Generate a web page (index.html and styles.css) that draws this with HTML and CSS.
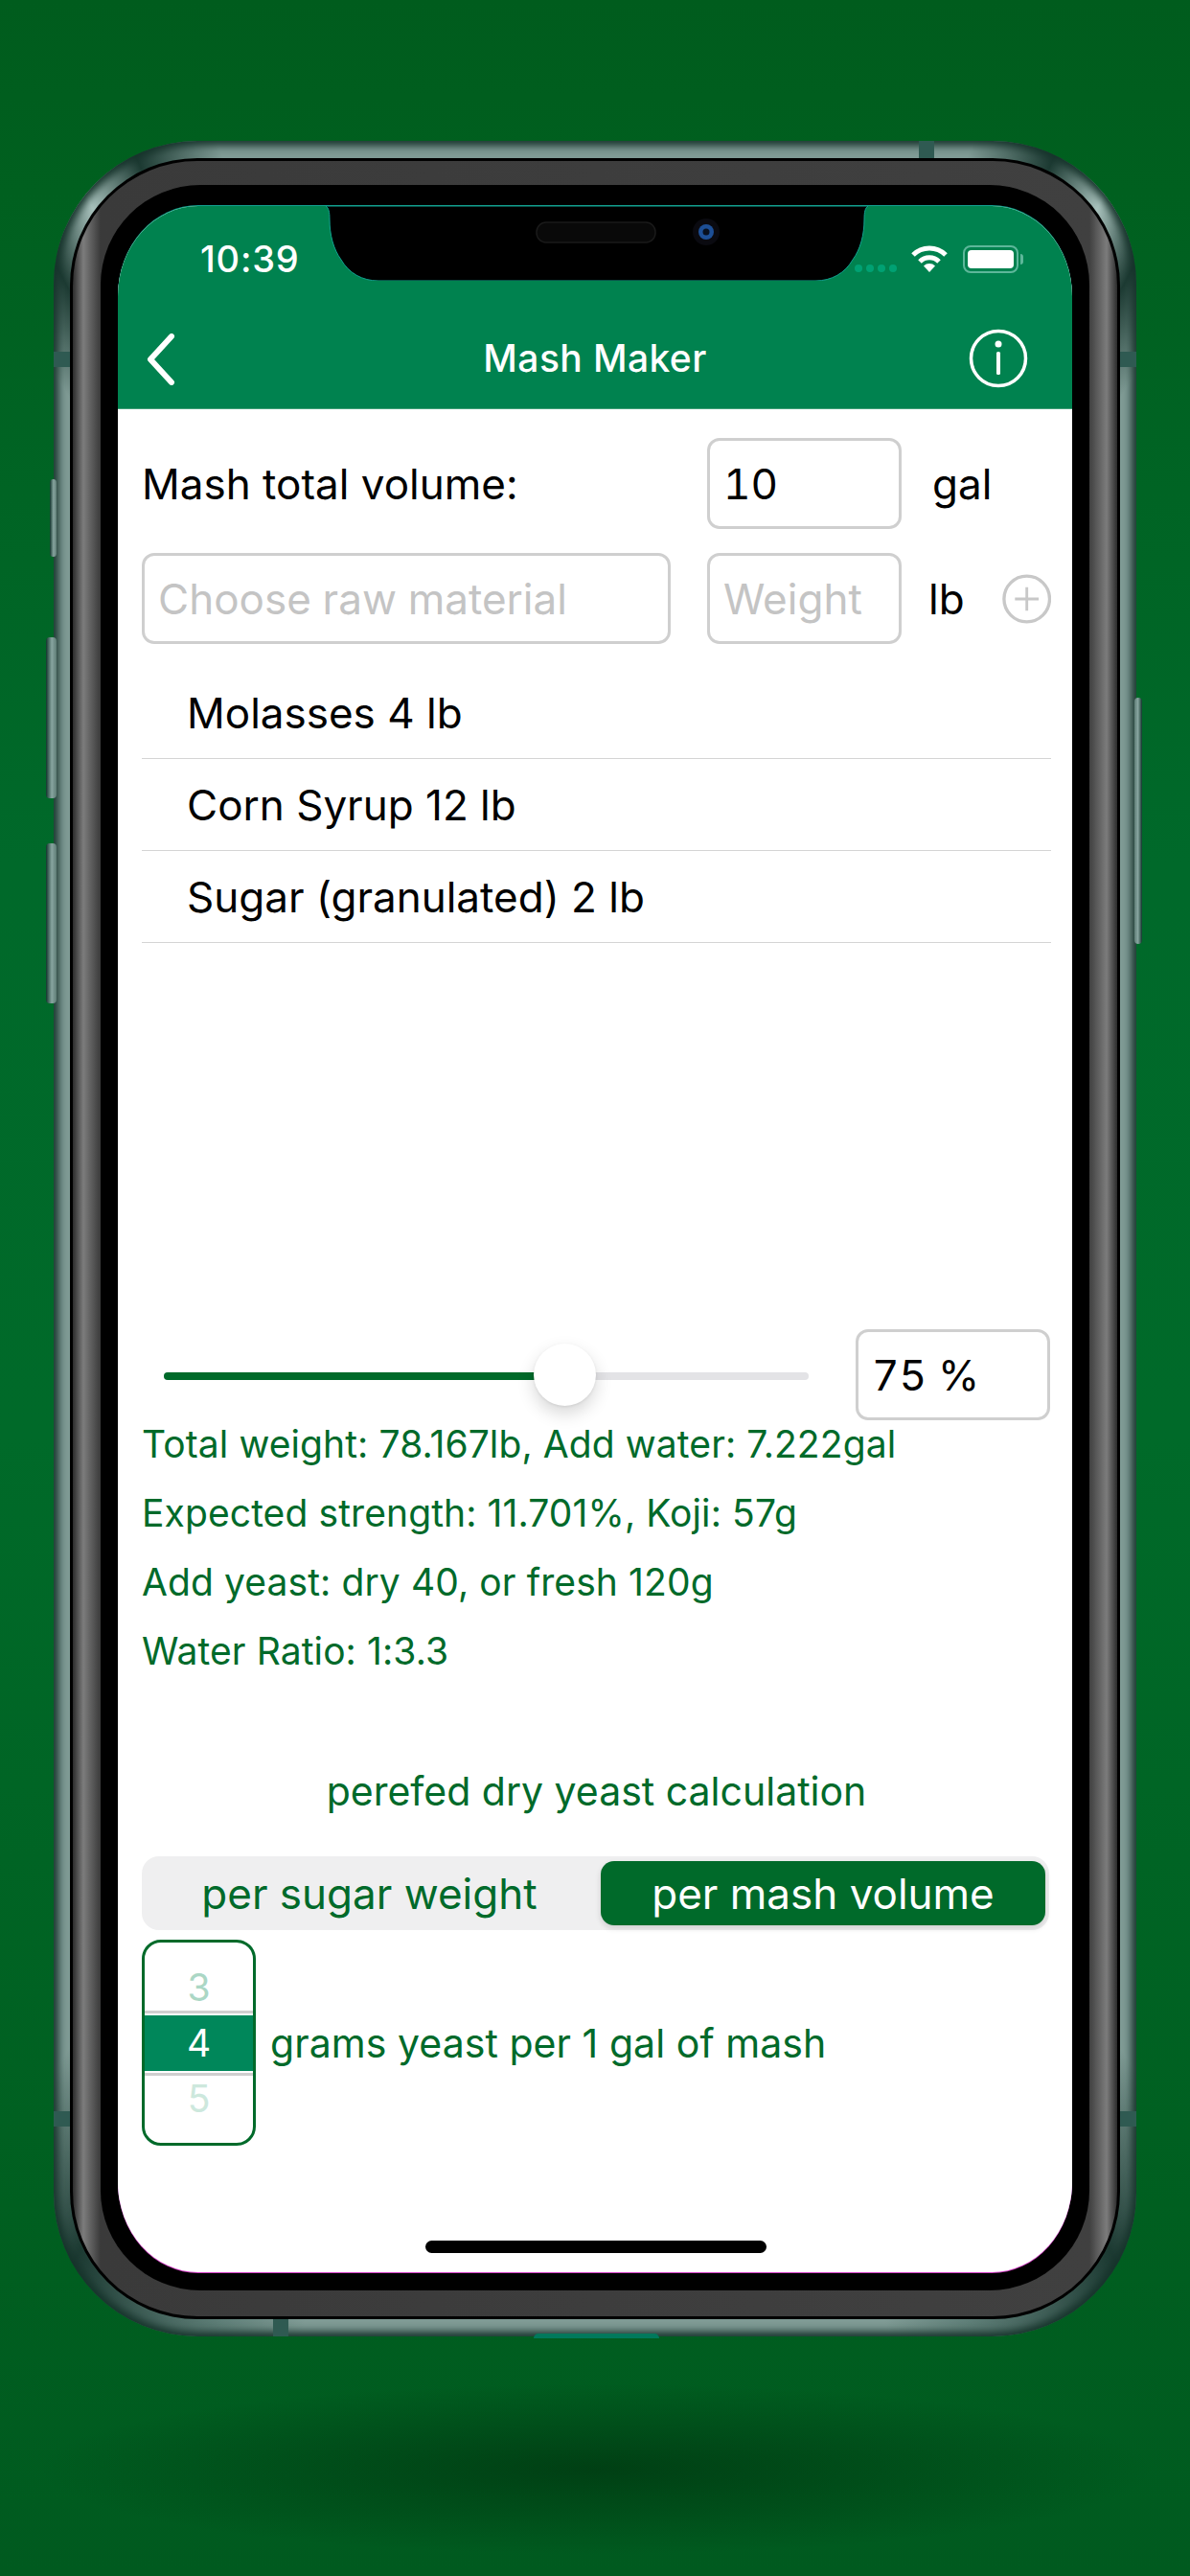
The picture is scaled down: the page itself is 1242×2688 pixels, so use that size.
FILE: index.html
```html
<!doctype html>
<html>
<head>
    <meta charset="UTF-8">
    <title>Mash Maker</title>
    <link rel="stylesheet" href="styles.css">
</head>
<body>
<div class="floor-shadow"></div>
<div class="phone">
    <i class="side-btn silent"></i>
    <i class="side-btn vol-up"></i>
    <i class="side-btn vol-down"></i>
    <i class="side-btn power"></i>
    <i class="seam seam-top"></i>
    <i class="seam seam-left"></i>
    <i class="seam seam-right"></i>
    <i class="seam seam-left-low"></i>
    <i class="seam seam-right-low"></i>
    <i class="seam seam-bottom"></i>
    <i class="port"></i>
    <div class="gap">
        <div class="bezel">
            <div class="glass">
                <div class="screen">
                    <svg class="notch" width="566" height="78" viewBox="0 0 566 78">
                        <path d="M0 0C3 2 4 6 4 14C4 30 8 45 16 56C24 70 38 78 55 78L511 78C528 78 542 70 550 56C558 45 562 30 562 14C562 6 563 2 566 0Z" fill="#000" stroke="#12a08f" stroke-width="1"/>
                        <rect x="220" y="17" width="124" height="21" rx="10" fill="#090909" stroke="#1a1a1a" stroke-width="1.5"/>
                        <circle cx="397" cy="27" r="14" fill="#0a0a10"/>
                        <circle cx="397" cy="27" r="8" fill="#1d4f96"/>
                        <circle cx="397" cy="27" r="3.5" fill="#08101f"/>
                    </svg>

                    <div class="header">
                        <div class="status">
                            <span class="time">10:39</span>
                            <div class="status-right">
                                <div class="dots"><i></i><i></i><i></i><i></i></div>
                                <svg width="38" height="28" viewBox="0 0 38 28">
                                    <path d="M2 10A24 24 0 0 1 36 10" fill="none" stroke="#fff" stroke-width="5"/>
                                    <path d="M9 17A14 14 0 0 1 29 17" fill="none" stroke="#fff" stroke-width="5"/>
                                    <path d="M19 28L13 21.500A8.500 8.500 0 0 1 25 21.500Z" fill="#fff"/>
                                </svg>
                                <div class="battery"><i></i></div>
                            </div>
                        </div>
                        <div class="nav">
                            <svg class="nav-back" width="32" height="54" viewBox="0 0 32 54">
                                <path d="M27 3L5 27L27 51" fill="none" stroke="#fff" stroke-width="6" stroke-linecap="round" stroke-linejoin="round"/>
                            </svg>
                            <span class="nav-title">Mash Maker</span>
                            <svg class="nav-info" width="62" height="62" viewBox="0 0 62 62">
                                <circle cx="31" cy="31" r="28.500" fill="none" stroke="#fff" stroke-width="3.500"/>
                                <circle cx="31" cy="16" r="3.500" fill="#fff"/>
                                <rect x="29" y="24" width="4" height="24" rx="1.500" fill="#fff"/>
                            </svg>
                        </div>
                    </div>

                    <div class="content">
                        <div class="form-row first">
                            <label class="label">Mash total volume:</label>
                            <input class="field small" type="text" value="10">
                            <span class="unit gal">gal</span>
                        </div>
                        <div class="form-row second">
                            <input class="field wide" type="text" placeholder="Choose raw material">
                            <input class="field small" type="text" placeholder="Weight">
                            <span class="unit lb">lb</span>
                            <svg class="add" width="54" height="54" viewBox="0 0 54 54">
                                <circle cx="27" cy="27" r="25" fill="none" stroke="#c8c8c8" stroke-width="3.500"/>
                                <path d="M27 14V40M14 27H40" stroke="#c8c8c8" stroke-width="3"/>
                            </svg>
                        </div>

                        <ul class="materials">
                            <li>Molasses 4 lb</li>
                            <li>Corn Syrup 12 lb</li>
                            <li>Sugar (granulated) 2 lb</li>
                        </ul>

                        <div class="slider-row">
                            <div class="slider">
                                <div class="track"><div class="track-fill"></div></div>
                                <div class="thumb"></div>
                            </div>
                            <input class="field small" type="text" value="75 %">
                        </div>

                        <div class="results">
                            <p>Total weight: 78.167lb, Add water: 7.222gal</p>
                            <p>Expected strength: 11.701%, Koji: 57g</p>
                            <p>Add yeast: dry 40, or fresh 120g</p>
                            <p>Water Ratio: 1:3.3</p>
                        </div>

                        <p class="prefer">perefed dry yeast calculation</p>

                        <div class="segment">
                            <div class="seg-item">per sugar weight</div>
                            <div class="seg-item active">per mash volume</div>
                        </div>

                        <div class="yeast-row">
                            <div class="picker">
                                <div class="pick-item far">3</div>
                                <div class="pick-item selected">4</div>
                                <div class="pick-item farther">5</div>
                            </div>
                            <span class="yeast-text">grams yeast per 1 gal of mash</span>
                        </div>
                    </div>

                    <div class="home-bar"></div>
                </div>
            </div>
        </div>
    </div>
</div>
</body>
</html>
```

FILE: styles.css
```css
* {
    margin: 0;
    padding: 0;
    box-sizing: border-box;
}

html {
    height: 2688px;
    overflow: hidden;
}

body {
    position: relative;
    height: 2688px;
    padding-top: 147px;
    display: flex;
    flex-direction: column;
    align-items: center;
    overflow: hidden;
    font-family: Inter, "Liberation Sans", sans-serif;
    background: linear-gradient(#005c1d 0, #00601f 200px, #00692a 900px, #006a29 1500px, #005f20 2300px, #005a1f 2688px);
}

.floor-shadow {
    position: absolute;
    left: 40px;
    top: 2440px;
    width: 1164px;
    height: 248px;
    background: radial-gradient(ellipse 50% 36% at 50% 55%, rgba(0, 45, 12, .6), rgba(0, 45, 12, 0));
}

/* phone body */
.phone {
    position: relative;
    width: 1130px;
    height: 2291px;
    padding: 18px 17px;
    border-radius: 150px;
    background: conic-gradient(#7f9b95 0 19deg, #1d3b33 23deg, #a9c2bd 26deg, #1d3b33 29deg, #7f9b95 32deg 147deg, #1d3b33 153deg, #5f7f78 161deg, #7f9b95 165deg 195deg, #5f7f78 199deg, #1d3b33 207deg, #7f9b95 213deg 328deg, #1d3b33 331deg, #a9c2bd 334deg, #1d3b33 337deg, #7f9b95 341deg);
    box-shadow: inset 0 0 8px 5px #16332b;
}

.gap {
    height: 100%;
    padding: 3px;
    border-radius: 133px;
    background: #000;
}

.bezel {
    height: 100%;
    padding: 25px 29px 27px;
    border-radius: 130px;
    background: linear-gradient(to right, #2c2c2c 0, #7c7c7c 11px, #3a3a3a 29px, #404040 calc(100% - 29px), #7c7c7c calc(100% - 11px), #2c2c2c 100%);
}

.glass {
    height: 100%;
    padding: 22px 18px 19px;
    border-radius: 104px;
    background: #000;
}

.screen {
    position: relative;
    height: 100%;
    overflow: hidden;
    border-radius: 84px / 94px;
    background: #fff;
    box-shadow: 0 1px 0 #d13fc4, 0 -1px 0 #12a08f;
}

.side-btn {
    position: absolute;
    background: linear-gradient(to right, #12352c, #88a5a0 55%, #5f7d76);
    border-radius: 4px;
}

.silent { left: -4px; top: 353px; width: 7px; height: 81px; }
.vol-up { left: -8px; top: 518px; width: 11px; height: 168px; }
.vol-down { left: -8px; top: 733px; width: 11px; height: 167px; }
.power { right: -6px; top: 581px; width: 8px; height: 257px; transform: scaleX(-1); }

.seam {
    position: absolute;
    background: #2f5a52;
}

.seam-top { left: 903px; top: 0; width: 16px; height: 18px; }
.seam-left { left: 0; top: 220px; width: 17px; height: 16px; }
.seam-right { right: 0; top: 220px; width: 17px; height: 16px; }
.seam-left-low { left: 0; top: 2056px; width: 17px; height: 16px; }
.seam-right-low { right: 0; top: 2056px; width: 17px; height: 16px; }
.seam-bottom { left: 229px; bottom: 0; width: 16px; height: 18px; }

.port {
    position: absolute;
    left: 501px;
    bottom: -2px;
    width: 131px;
    height: 5px;
    border-radius: 6px 6px 0 0;
    background: #00795c;
}

/* notch lies over the green header */
.notch {
    position: absolute;
    top: 0;
    left: 217px;
    z-index: 2;
}

.header {
    height: 212px;
    background: #00824f;
    border-bottom: 1px solid #3f9f78;
    color: #fff;
}

.status {
    height: 110px;
    padding: 0 51px 0 86px;
    display: flex;
    align-items: center;
    justify-content: space-between;
}

.time {
    font-size: 38px;
    font-weight: 500;
    letter-spacing: .8px;
}

.status-right {
    display: flex;
    align-items: center;
}

.dots {
    display: flex;
    gap: 4px;
    margin: 20px 15px 0 0;
}

.dots i {
    width: 8px;
    height: 8px;
    border-radius: 50%;
    background: #00a173;
}

.battery {
    position: relative;
    width: 58px;
    height: 29px;
    margin-left: 16px;
    margin-right: 5px;
    padding: 3px;
    border: 2px solid #5db79a;
    border-radius: 8px;
}

.battery i {
    display: block;
    height: 100%;
    border-radius: 4px;
    background: #fff;
}

.battery:after {
    content: "";
    position: absolute;
    right: -7px;
    top: 7px;
    width: 3px;
    height: 11px;
    border-radius: 0 3px 3px 0;
    background: #5db79a;
}

.nav {
    position: relative;
    height: 97px;
    display: flex;
    align-items: center;
    justify-content: center;
}

.nav-title {
    font-size: 39px;
    font-weight: 500;
    letter-spacing: .4px;
}

.nav-back {
    position: absolute;
    left: 29px;
    top: 23px;
}

.nav-info {
    position: absolute;
    right: 46px;
    top: 18px;
}

.content {
    padding: 30px 22px 0 25px;
}

.form-row {
    height: 95px;
    display: flex;
    align-items: center;
}

.form-row.second {
    margin-top: 25px;
}

.label {
    width: 590px;
    font-size: 44px;
    color: #000;
}

.field {
    height: 95px;
    padding: 0 14px;
    border: 3px solid #cfcfcf;
    border-radius: 13px;
    outline: none;
    background: #fff;
    color: #000;
    font-family: Inter, "Liberation Sans", sans-serif;
    font-feature-settings: "tnum";
    font-size: 44px;
}

.field::placeholder {
    color: #c4c4c4;
    opacity: 1;
}

.field.small {
    width: 203px;
}

.field.wide {
    width: 552px;
    margin-right: 38px;
}

.unit {
    font-size: 44px;
    color: #000;
}

.gal {
    margin-left: 32px;
}

.lb {
    margin-left: 28px;
}

.add {
    margin-left: 39px;
}

.materials {
    margin-top: 24px;
    list-style: none;
}

.materials li {
    height: 96px;
    padding-left: 47px;
    display: flex;
    align-items: center;
    border-bottom: 1px solid #d4d4d4;
    font-size: 44px;
    color: #000;
}

.slider-row {
    margin-top: 403px;
    display: flex;
    align-items: center;
    width: 948px;
}

.slider {
    position: relative;
    width: 673px;
    height: 95px;
    margin: 0 49px 0 23px;
    display: flex;
    align-items: center;
}

.track {
    width: 100%;
    height: 8px;
    margin-top: 3px;
    border-radius: 4px;
    overflow: hidden;
    background: #e3e3e6;
}

.track-fill {
    width: 62%;
    height: 100%;
    background: #006a2a;
}

.thumb {
    position: absolute;
    left: 386px;
    top: 15px;
    width: 65px;
    height: 65px;
    border-radius: 50%;
    background: #fff;
    box-shadow: 0 8px 18px rgba(0, 0, 0, .16), 0 1px 3px rgba(0, 0, 0, .08);
}

.results p {
    height: 50px;
    margin-bottom: 22px;
    line-height: 50px;
    font-size: 39px;
    letter-spacing: .1px;
    color: #006a2a;
}

.prefer {
    height: 50px;
    margin-top: 96px;
    line-height: 50px;
    text-align: center;
    font-size: 41px;
    color: #006a2a;
}

.segment {
    width: 947px;
    height: 77px;
    margin-top: 43px;
    padding: 5px 4px;
    display: flex;
    border-radius: 18px;
    background: #efeff0;
}

.seg-item {
    flex: 1;
    padding-right: 8px;
    display: flex;
    align-items: center;
    justify-content: center;
    border-radius: 14px;
    font-size: 44px;
    color: #006a2a;
}

.seg-item.active {
    flex: none;
    width: 464px;
    padding-right: 0;
    background: #006a2a;
    color: #fff;
    box-shadow: 0 3px 6px rgba(0, 0, 0, .14);
}

.yeast-row {
    margin-top: 10px;
    display: flex;
    align-items: center;
}

.picker {
    width: 119px;
    height: 215px;
    margin-right: 15px;
    display: flex;
    flex-direction: column;
    justify-content: center;
    border: 3px solid #006a2a;
    border-radius: 20px;
    overflow: hidden;
}

.pick-item {
    height: 58px;
    display: flex;
    align-items: center;
    justify-content: center;
    font-size: 39px;
}

.pick-item.far {
    color: #abd7c5;
}

.pick-item.farther {
    color: #cde8dd;
}

.pick-item.selected {
    background: #00875a;
    color: #fff;
    box-shadow: 0 -2px 0 #fff, 0 -5px 0 #cfcfcf, 0 2px 0 #fff, 0 5px 0 #cfcfcf;
}

.yeast-text {
    font-size: 41px;
    letter-spacing: .05px;
    color: #006a2a;
}

.home-bar {
    position: absolute;
    left: 321px;
    bottom: 20px;
    width: 356px;
    height: 13px;
    border-radius: 7px;
    background: #000;
}
```
